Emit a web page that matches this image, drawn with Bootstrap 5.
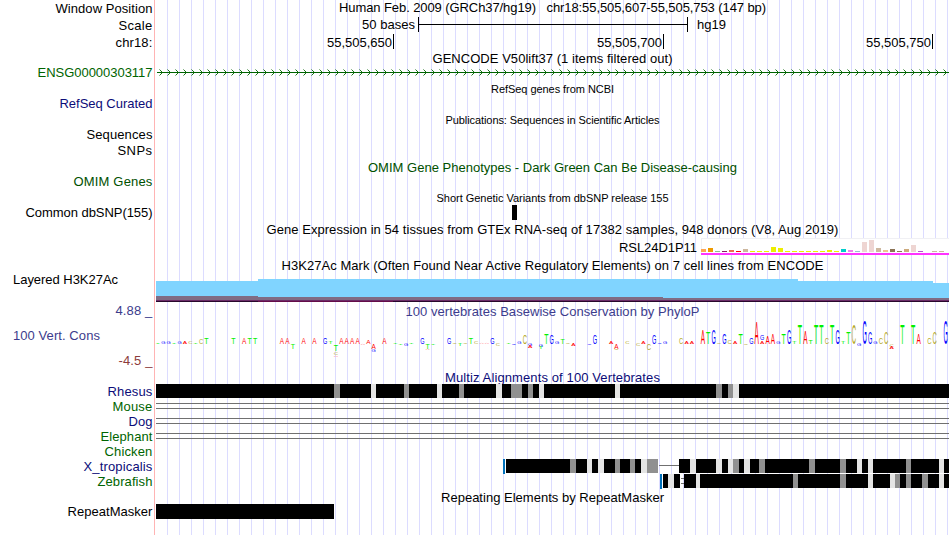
<!DOCTYPE html>
<html lang="en">
<head>
    <meta charset="UTF-8">
    <meta name="viewport" content="width=device-width, initial-scale=1.0">
    <title>Human hg19 chr18:55,505,607-55,505,753</title>
    <link rel="stylesheet" href="https://cdn.jsdelivr.net/npm/bootstrap@5.3.0/dist/css/bootstrap.min.css">
    <script defer src="https://cdn.jsdelivr.net/npm/bootstrap@5.3.0/dist/js/bootstrap.bundle.min.js"></script>
    <style>
        body { font-family: "Liberation Sans", Arial, sans-serif; font-size: 13px; line-height: 15px; color: #000; }
        .browser-view { width: 949px; height: 535px; }
        .side-labels { width: 155px; border-right: 1px solid #ffb4b4; padding-top: 1px; padding-right: 1.5px; }
        .side-labels div { height: 15px; white-space: pre; }
        .side-labels .track-name { padding-left: 13px; }
        .tracks { width: 793px; margin-left: 1px; background: repeating-linear-gradient(to right, transparent 0 11px, #dcdcff 11px 12px); }
        .tracks svg { display: block; flex: none; overflow: visible; }
        .track-title { height: 14px; white-space: pre; flex: none; }
        .track-title.sm { height: 13px; font-size: 11px; line-height: 13px; }
        svg text { font-family: "Liberation Sans", Arial, sans-serif; }
        .navy { color: #0c0c78; }
        .dkgreen { color: #005000; }
        .green { color: #006400; }
        .phylo { color: #3c3c8c; }
        .phylo-neg { color: #8c3c3c; }
    </style>
</head>
<body class="bg-white overflow-hidden">
    <div class="browser-view d-flex overflow-hidden">
        <div class="side-labels d-flex flex-column align-items-end flex-shrink-0" id="labels"></div>

        <div class="tracks d-flex flex-column flex-shrink-0">
            <div class="track-title text-center"><span data-w="427">Human Feb. 2009 (GRCh37/hg19)   chr18:55,505,607-55,505,753 (147 bp)</span></div>

            <!-- Scale bar and chromosome ruler -->
            <svg width="793" height="37" viewBox="156 14 793 37" shape-rendering="crispEdges">
                <path d="M418 17h1v15h-1zM687 17h1v15h-1zM418 24h270v1h-270zM393 34h1v15h-1zM663 34h1v15h-1zM932 34h1v15h-1z"/>
                <text x="362" y="29" font-size="13" textLength="53">50 bases</text>
                <text x="697" y="29" font-size="13" textLength="29">hg19</text>
                <text x="327" y="47" font-size="13" textLength="65">55,505,650</text>
                <text x="597" y="47" font-size="13" textLength="65">55,505,700</text>
                <text x="866" y="47" font-size="13" textLength="65">55,505,750</text>
            </svg>

            <div class="track-title text-center"><span data-w="240">GENCODE V50lift37 (1 items filtered out)</span></div>
            <svg width="793" height="16" viewBox="156 65 793 16" id="gene"></svg>

            <div class="track-title sm text-center" style="margin-top: 2px"><span data-w="123">RefSeq genes from NCBI</span></div>
            <div class="track-title sm text-center" style="margin-top: 18px"><span data-w="214">Publications: Sequences in Scientific Articles</span></div>
            <div class="track-title text-center dkgreen" style="margin-top: 33px"><span data-w="369">OMIM Gene Phenotypes - Dark Green Can Be Disease-causing</span></div>

            <div class="track-title sm text-center" style="margin-top: 18px"><span data-w="232">Short Genetic Variants from dbSNP release 155</span></div>
            <svg width="793" height="17" viewBox="156 205 793 17"><rect x="512" y="205" width="5" height="15"/></svg>

            <div class="track-title text-center"><span data-w="572">Gene Expression in 54 tissues from GTEx RNA-seq of 17382 samples, 948 donors (V8, Aug 2019)</span></div>
            <svg width="793" height="22" viewBox="156 236 793 22" id="gtex" shape-rendering="crispEdges"></svg>

            <div class="track-title text-center"><span data-w="542">H3K27Ac Mark (Often Found Near Active Regulatory Elements) on 7 cell lines from ENCODE</span></div>
            <svg width="793" height="32" viewBox="156 272 793 32" shape-rendering="crispEdges">
                <path fill="#80d4ff" d="M156 281H258V279H798V281H933V283H949V300H156z"/>
                <path fill="#806c84" d="M156 296H258V297H663V298H949V300H156z"/>
                <path fill="#6c2c68" d="M156 300H949V301H156z"/>
                <path fill="#28082c" d="M156 301H949V302H156z"/>
                <path fill="#640c48" d="M258 301H393V302H258z"/>
            </svg>

            <div class="track-title text-center phylo"><span data-w="294">100 vertebrates Basewise Conservation by PhyloP</span></div>
            <svg width="793" height="52" viewBox="156 318 793 52" id="logo"></svg>

            <div class="track-title text-center navy"><span data-w="215">Multiz Alignments of 100 Vertebrates</span></div>
            <svg width="793" height="106" viewBox="156 384 793 106" id="multiz" shape-rendering="crispEdges"></svg>

            <div class="track-title text-center"><span data-w="223">Repeating Elements by RepeatMasker</span></div>
            <svg width="793" height="31" viewBox="156 504 793 31"><rect x="156" y="504" width="178" height="15"/></svg>
        </div>
    </div>

    <script>
        // text, space above, text width, colour class, left aligned
        const labels = [
            ['Window Position', 0, 97, ''],
            ['Scale', 2, 34, ''],
            ['chr18:', 2, 37, ''],
            ['ENSG00000303117', 15, 115, 'green'],
            ['RefSeq Curated', 16, 93, 'navy'],
            ['Sequences', 16, 66, ''],
            ['SNPs', 1, 35, ''],
            ['OMIM Genes', 16, 79, 'dkgreen'],
            ['Common dbSNP(155)', 16, 127, ''],
            ['Layered H3K27Ac', 52, 105, '', true],
            ['4.88 _', 16, 37, 'phylo'],
            ['100 Vert. Cons', 10, 87, 'phylo', true],
            ['-4.5 _', 10, 34, 'phylo-neg'],
            ['Rhesus', 16, 45, 'navy'],
            ['Mouse', 0, 40, 'green'],
            ['Dog', 0, 24, 'navy'],
            ['Elephant', 0, 52, 'green'],
            ['Chicken', 0, 48, 'green'],
            ['X_tropicalis', 0, 69, 'navy'],
            ['Zebrafish', 0, 55, 'green'],
            ['RepeatMasker', 15, 85, '']
        ];

        document.getElementById('labels').innerHTML = labels.map(([text, gap, w, color, left]) =>
            `<div class="${color} ${left ? 'align-self-start track-name' : ''}" style="margin-top:${gap}px"><span data-w="${w}">${text}</span></div>`
        ).join('');

        // Spread the letters so each text takes its own width
        document.querySelectorAll('[data-w]').forEach((el) => {
            const extra = el.dataset.w - el.getBoundingClientRect().width;
            el.style.letterSpacing = (extra / el.textContent.length) + 'px';
        });

        // Gene line with strand arrows
        let arrows = '';
        for (let x = 162; x < 949; x += 8) {
            arrows += `M${x - 2.5} 69.5l3 3l-3 3`;
        }
        document.getElementById('gene').innerHTML =
            `<rect x="157" y="72" width="792" height="1" fill="#006400"/><path d="${arrows}" fill="none" stroke="#006400" stroke-width=".9"/>`;

        // Tissue expression bars
        const tissues = [
            ['#ffa54f', 3], ['#ee9a00', 4], ['#8fbc8f', 1], ['#8b1c62', 1], ['#ee6a50', 2], ['#ff0000', 1], ['#cdb79e', 3],
            ['#eeee00', 1], ['#eeee00', 1], ['#eeee00', 1], ['#eeee00', 5], ['#eeee00', 4], ['#eeee00', 1], ['#eeee00', 1],
            ['#eeee00', 1], ['#eeee00', 1], ['#eeee00', 1], ['#eeee00', 1], ['#eeee00', 2], ['#eeee00', 1], ['#00cdcd', 3],
            ['#ee82ee', 2], ['#9ac0cd', 1], ['#eed5d2', 10], ['#eed5d2', 12], ['#cdb79e', 4], ['#eec591', 2], ['#8b7355', 3],
            ['#8b7355', 1], ['#cdaa7d', 3], ['#eed5d2', 7], ['#b452cd', 1], ['#ffffff', 1], ['#cdb79e', 1], ['#cdb79e', 1]
        ];
        document.getElementById('gtex').innerHTML =
            '<text x="619" y="252" font-size="13" textLength="78">RSL24D1P11</text>' +
            '<rect x="701" y="238" width="248" height="15" fill="#f0f0f4"/><rect x="702" y="239" width="247" height="14" fill="#fff"/>' +
            tissues.map(([c, h], i) => `<rect x="${701 + i * 7}" y="${252 - h}" width="5" height="${h}" fill="${c}"/>`).join('') +
            '<rect x="701" y="253" width="248" height="2" fill="#ff33ff"/>';

        // Conservation letters: base index + letter + height, negative heights hang below zero
        const logo = `0T1 1G2 2G2 3T1 4G2 5A2 6C2 7T1 8C5 9T6 14T6 16A6 17T6 18T6 23A6 24A6 25T-5 27A6 29A6 31G6 32T2
            33T-7 34A6 35A6 36A6 37A6 38A-1 39A4 40A-5 42A7 44T1 45T-1 46G-2 47T1 49G7 50T-5 51T-1 54G6 55C1 56T-2
            57C1 58T6 59C2 60A1 61A1 62G7 63C-2 65T1 66G-1 67G3 68C9 69G-2 71G-3 72T10 73G9 74G2 75T5 76C1 77A-2
            80G-1 81G9 84A2 85A-5 87C2 89C-2 90A2 91C-6 92G9 93G1 94G2 97C6 98A3 99A2 101A14 102T12 103G15 104C1
            105G10 106C4 107A3 108T11 109C-1 110G7 111A22 113A8 114A10 115G2 116T11 117G15 118T2 119T19
            120A13 121T4 122T19 123T19 124C7 125T20 126G15 127T2 128T12 129C19 130G-2 131G23 132G12 133G3 134C7
            135C12 136C-3 138T20 140T20 141A11 143C7 144C12 146G23`;
        const baseColor = { A: '#ff0000', C: '#b4a828', G: '#0000ff', T: '#00f000' };
        const baseAdvance = { A: 6.67, C: 7.22, G: 7.78, T: 6.11 };

        function drawBase(i, base, height, zero) {
            const w = 4.3;
            const x = 156 + i * 793 / 147 - .2;
            const y = height > 0 ? zero : zero - height;
            const sy = Math.abs(height) / 7.1;
            return `<text transform="translate(${x} ${y}) scale(${w / baseAdvance[base]} ${sy})" font-size="10" fill="${baseColor[base]}">${base}</text>`;
        }

        document.getElementById('logo').innerHTML = logo.trim().split(/\s+/).map((item) => {
            const [, i, base, h] = item.match(/(\d+)([ACGT])(-?\d+)/);
            return drawBase(+i, base, +h, +h > 0 ? 343.6 : 344);
        }).join('') +
            drawBase(33, 'C', -3, 352) + drawBase(33, 'A', -1, 355.5) + drawBase(40, 'G', -2, 349.5) +
            drawBase(69, 'A', -2, 346) + drawBase(71, 'T', -2, 347) + drawBase(50, 'A', -1, 349) +
            drawBase(85, 'C', -1, 349) + drawBase(112, 'G', 5, 340) + drawBase(112, 'A', 3, 343.6) +
            drawBase(136, 'A', -2, 347);

        // Pairwise alignments: black runs with grey (g) and light (l) blocks
        const blocks = [
            { y: 384, runs: [[156, 949]],
              g: [[334, 340], [404, 409], [459, 464], [511, 522], [528, 533], [716, 722], [728, 733]],
              l: [[371, 376], [437, 442], [496, 502], [539, 544], [615, 620], [733, 739]] },
            { y: 459, runs: [[506, 658], [679, 949]],
              g: [[570, 576], [615, 620], [630, 635], [647, 658], [733, 739], [759, 765], [809, 815], [840, 846], [906, 911]],
              l: [[587, 592], [598, 604], [641, 647], [690, 696], [716, 722], [728, 733], [744, 750], [857, 862], [868, 873], [939, 944]] },
            { y: 474, runs: [[663, 680], [684, 949]],
              g: [[793, 798], [840, 846], [895, 900], [906, 911], [922, 928]],
              l: [[668, 674], [696, 700], [868, 873], [890, 895], [939, 944]] }
        ];

        function bar(x1, x2, y, h, fill) {
            return `<rect x="${x1}" y="${y}" width="${x2 - x1}" height="${h}" fill="${fill}"/>`;
        }

        let multiz = '';
        [403, 408, 418, 423, 433, 438].forEach((y) => { multiz += bar(156, 949, y, 1, '#707070'); });
        multiz += bar(503, 505, 459, 15, '#0072bc') + bar(660, 662, 474, 15, '#0072bc');
        multiz += bar(659, 679, 465, 1, '#707070') + bar(681, 684, 478, 1, '#707070') + bar(681, 684, 483, 1, '#707070');
        blocks.forEach((b) => {
            b.runs.forEach((r) => { multiz += bar(r[0], r[1], b.y, 14, '#000'); });
            b.g.forEach((r) => { multiz += bar(r[0], r[1], b.y, 14, '#909090'); });
            b.l.forEach((r) => { multiz += bar(r[0], r[1], b.y, 14, '#e4e4e4'); });
        });
        document.getElementById('multiz').innerHTML = multiz;
    </script>
</body>
</html>
